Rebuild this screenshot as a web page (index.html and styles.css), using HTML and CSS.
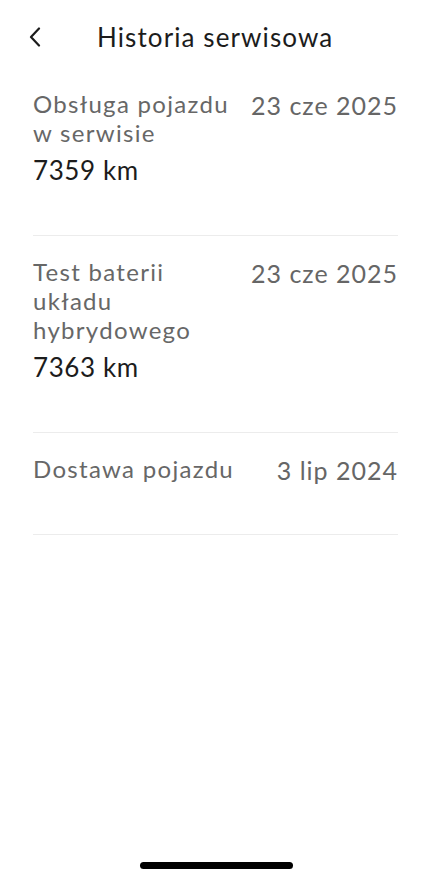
FILE: index.html
```html
<!DOCTYPE html>
<html lang="pl">

<head>
	<meta charset="utf-8">
	<title>Historia serwisowa</title>
	<link rel="stylesheet" href="styles.css">
</head>

<body>
	<header class="topbar">
		<button class="back" aria-label="Wstecz">
			<svg width="14" height="20" viewBox="0 0 14 20" fill="none">
				<path d="M11 1.5 L3 10 L11 18.5" stroke="#1c1c1c" stroke-width="2.2" stroke-linecap="round" stroke-linejoin="round" />
			</svg>
		</button>
		<h1 class="title">Historia serwisowa</h1>
	</header>

	<ul class="history">
		<li class="entry">
			<div class="entry-main">
				<div class="entry-name">Obsługa pojazdu w serwisie</div>
				<div class="entry-km">7359 km</div>
			</div>
			<div class="entry-date">23 cze 2025</div>
		</li>
		<li class="entry">
			<div class="entry-main">
				<div class="entry-name">Test baterii układu hybrydowego</div>
				<div class="entry-km">7363 km</div>
			</div>
			<div class="entry-date">23 cze 2025</div>
		</li>
		<li class="entry">
			<div class="entry-main">
				<div class="entry-name">Dostawa pojazdu</div>
			</div>
			<div class="entry-date">3 lip 2024</div>
		</li>
	</ul>

	<div class="home-indicator"></div>
</body>

</html>
```

FILE: styles.css
```css
html {
	font-family: Lato, "Open Sans", sans-serif;
	background: #fff;
}

body {
	margin: 0;
	height: 880px;
	position: relative;
	color: #1c1c1c;
}

.topbar {
	display: flex;
	align-items: center;
	padding: 22px 0 0 28px;
	height: 30px;
}

.back {
	border: 0;
	background: none;
	padding: 0;
	width: 16px;
	height: 20px;
	display: flex;
	cursor: pointer;
}

.title {
	margin: 0 0 0 53px;
	font-size: 26px;
	font-weight: 400;
	letter-spacing: 1.1px;
	line-height: 30px;
}

.history {
	list-style: none;
	margin: 16px 24px 0 33px;
	padding: 0;
}

.entry {
	display: flex;
	justify-content: space-between;
	gap: 12px;
	padding: 21px 0 49px;
	border-bottom: 1px solid #ececec;
}

.entry-main {
	width: 204px;
}

.entry-name {
	font-size: 24px;
	line-height: 29px;
	color: #676767;
	letter-spacing: 1.3px;
}

.entry-km {
	margin-top: 7px;
	font-size: 26px;
	line-height: 32px;
	color: #1c1c1c;
	letter-spacing: 0.6px;
}

.entry-date {
	padding-top: 2px;
	font-size: 25px;
	line-height: 29px;
	color: #666;
	white-space: nowrap;
	letter-spacing: 1px;
}

.home-indicator {
	position: absolute;
	left: 140px;
	bottom: 11px;
	width: 153px;
	height: 7px;
	border-radius: 4px;
	background: #000;
}
```
